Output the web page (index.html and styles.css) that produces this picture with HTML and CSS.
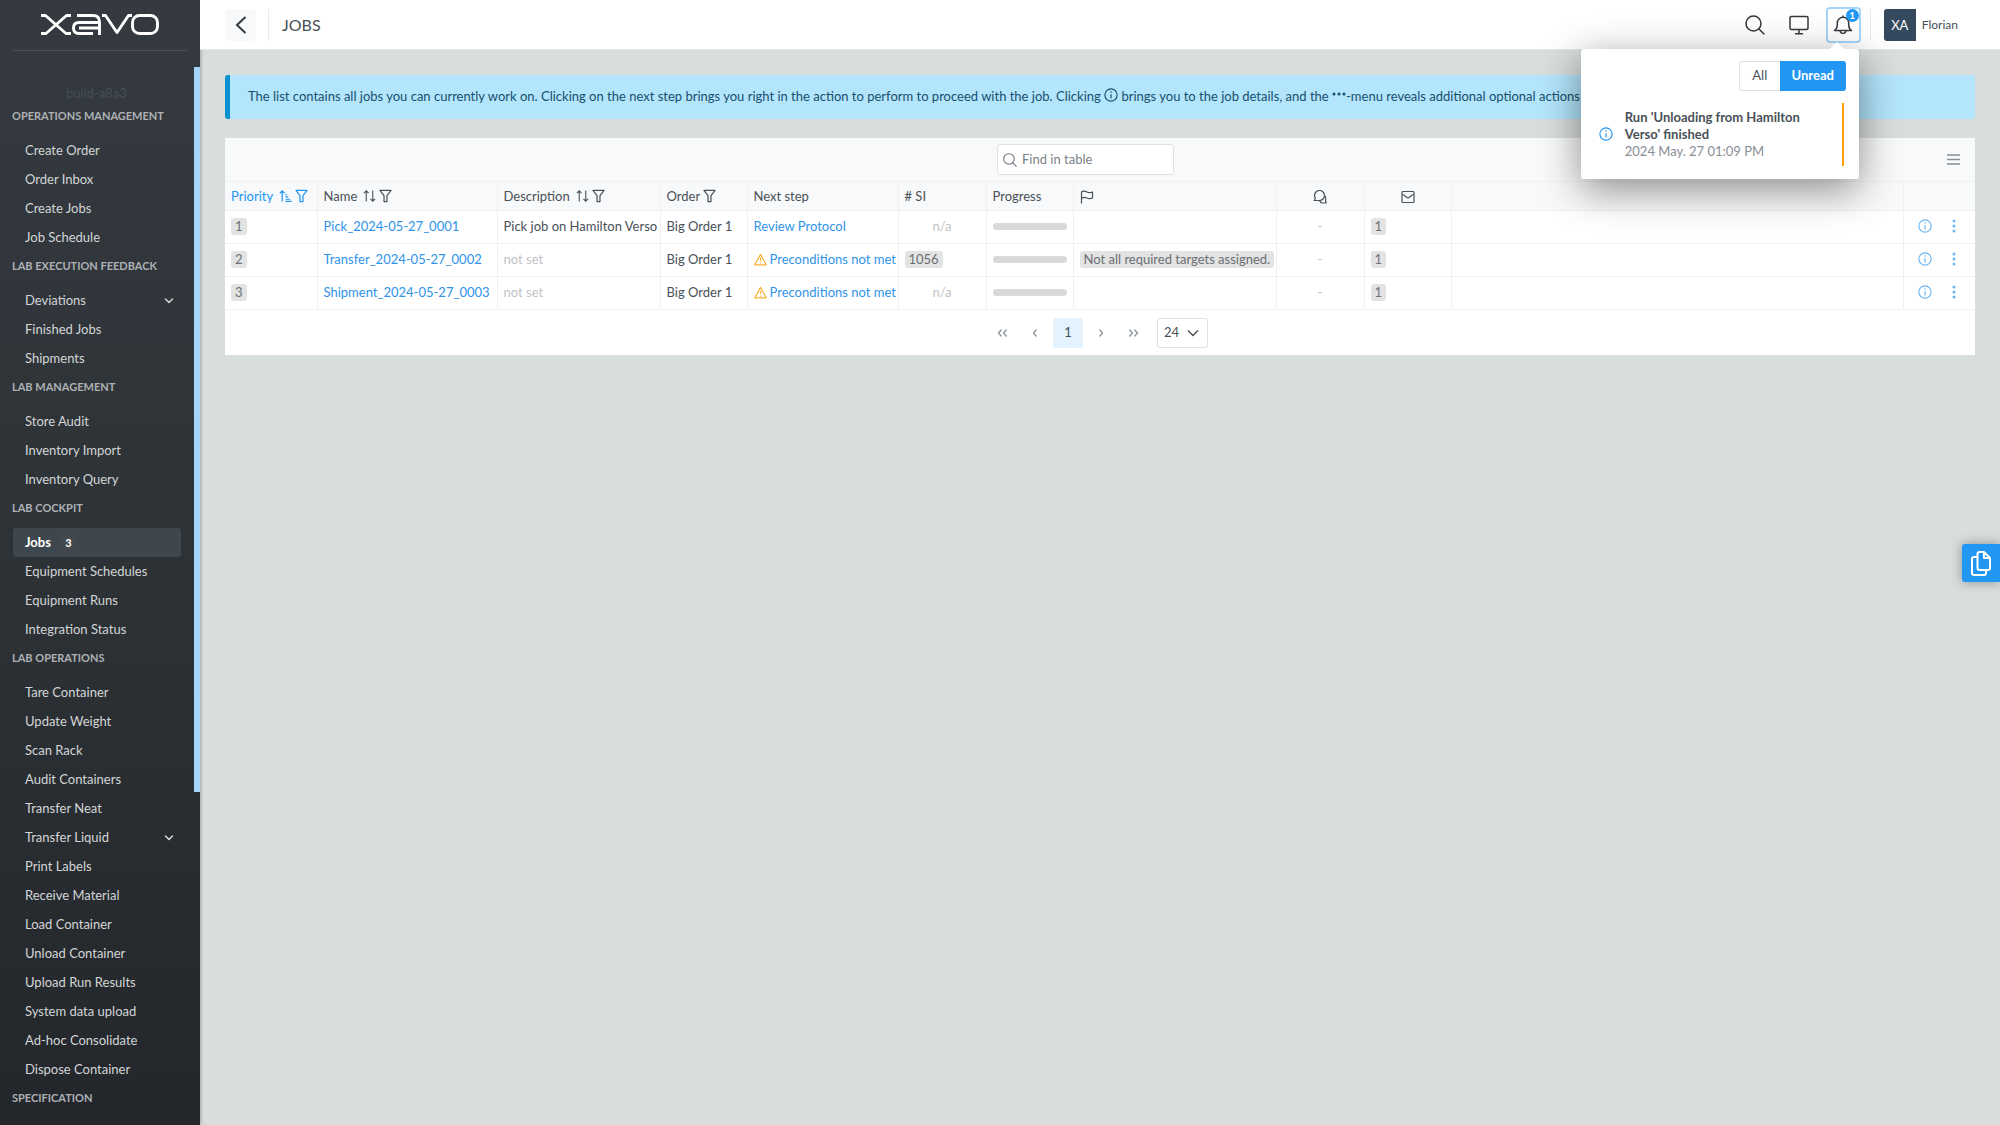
FILE: index.html
```html
<!DOCTYPE html>
<html lang="en">
<head>
<meta charset="utf-8">
<title>Jobs</title>
<link rel="stylesheet" href="styles.css">
</head>
<body>
<svg class="defs" aria-hidden="true">
  <symbol id="i-info" viewBox="0 0 16 16"><circle cx="8" cy="8" r="7" fill="none" stroke="currentColor" stroke-width="1.3"/><path d="M8 7v5" stroke="currentColor" stroke-width="1.4"/><circle cx="8" cy="4.6" r=".9" fill="currentColor"/></symbol>
  <symbol id="i-filter" viewBox="0 0 14 14"><path d="M1 1h12L8.6 6.6V13H5.4V6.6z" fill="none" stroke="currentColor" stroke-width="1.3" stroke-linejoin="round"/></symbol>
  <symbol id="i-sort" viewBox="0 0 14 14"><path d="M3.5 13V1.5M1 4l2.500-2.600L6 4M10.500 1v11.500M8 10l2.500 2.600L13 10" fill="none" stroke="currentColor" stroke-width="1.2"/></symbol>
  <symbol id="i-sorted" viewBox="0 0 14 14"><path d="M3.500 13V1.500M1 4l2.500-2.600L6 4" fill="none" stroke="currentColor" stroke-width="1.300"/><path d="M7 5.500h1.500M7 8h3M7 10.500h5M7 12.700h6.500" stroke="currentColor" stroke-width="1.300"/></symbol>
  <symbol id="i-search" viewBox="0 0 20 20"><circle cx="8.500" cy="8.500" r="7.500" fill="none" stroke="currentColor" stroke-width="1.500"/><path d="M14 14l5 5" stroke="currentColor" stroke-width="1.500" stroke-linecap="round"/></symbol>
  <symbol id="i-warn" viewBox="0 0 14 14"><path d="M7 1.500L13.200 12.800H.8z" fill="none" stroke="currentColor" stroke-width="1.200" stroke-linejoin="round"/><path d="M7 5v4M7 10.200v1.300" stroke="currentColor" stroke-width="1.200"/></symbol>
  <symbol id="i-down" viewBox="0 0 10 10"><path d="M1.500 3l3.500 3.500L8.500 3" fill="none" stroke="currentColor" stroke-width="1.500" stroke-linecap="round" stroke-linejoin="round"/></symbol>
  <symbol id="i-left" viewBox="0 0 10 10"><path d="M6.500 1.500L3.500 5l3 3.500" fill="none" stroke="currentColor" stroke-width="1.200"/></symbol>
  <symbol id="i-dots" viewBox="0 0 4 14"><circle cx="2" cy="2" r="1.500"/><circle cx="2" cy="7" r="1.500"/><circle cx="2" cy="12" r="1.500"/></symbol>
</svg>
<div class="app">
  <aside class="sidebar">
    <a class="logo" href="#" aria-label="Xavo home">
      <svg width="118" height="21" viewBox="0 0 118 21" fill="none" stroke="#fff" stroke-width="2.900" stroke-linejoin="round">
        <path d="M0 1.500h4.500L25 19.500H30M30 1.500h-4.500L5 19.500H0"/>
        <path d="M36 1.500H52Q58.500 1.500 58.500 8V21M58.500 8.500H38Q32.500 8.500 32.500 14T38 19.500H52M38 14H58.500"/>
        <path d="M61 1.500h3.500L76 18.500 87.500 1.500H91"/>
        <rect x="91.500" y="1.500" width="25" height="18" rx="7"/>
      </svg>
    </a>
    <p class="build">build-a8a3</p>
    <nav class="nav">
      <h2>OPERATIONS MANAGEMENT</h2>
      <ul>
        <li><a href="#">Create Order</a></li>
        <li><a href="#">Order Inbox</a></li>
        <li><a href="#">Create Jobs</a></li>
        <li><a href="#">Job Schedule</a></li>
      </ul>
      <h2>LAB EXECUTION FEEDBACK</h2>
      <ul>
        <li><a href="#">Deviations<svg class="caret"><use href="#i-down"/></svg></a></li>
        <li><a href="#">Finished Jobs</a></li>
        <li><a href="#">Shipments</a></li>
      </ul>
      <h2>LAB MANAGEMENT</h2>
      <ul>
        <li><a href="#">Store Audit</a></li>
        <li><a href="#">Inventory Import</a></li>
        <li><a href="#">Inventory Query</a></li>
      </ul>
      <h2>LAB COCKPIT</h2>
      <ul>
        <li><a class="active" href="#">Jobs<span class="count">3</span></a></li>
        <li><a href="#">Equipment Schedules</a></li>
        <li><a href="#">Equipment Runs</a></li>
        <li><a href="#">Integration Status</a></li>
      </ul>
      <h2>LAB OPERATIONS</h2>
      <ul>
        <li><a href="#">Tare Container</a></li>
        <li><a href="#">Update Weight</a></li>
        <li><a href="#">Scan Rack</a></li>
        <li><a href="#">Audit Containers</a></li>
        <li><a href="#">Transfer Neat</a></li>
        <li><a href="#">Transfer Liquid<svg class="caret"><use href="#i-down"/></svg></a></li>
        <li><a href="#">Print Labels</a></li>
        <li><a href="#">Receive Material</a></li>
        <li><a href="#">Load Container</a></li>
        <li><a href="#">Unload Container</a></li>
        <li><a href="#">Upload Run Results</a></li>
        <li><a href="#">System data upload</a></li>
        <li><a href="#">Ad-hoc Consolidate</a></li>
        <li><a href="#">Dispose Container</a></li>
      </ul>
      <h2>SPECIFICATION</h2>
    </nav>
    <div class="scroll-thumb"></div>
  </aside>

  <div class="main">
    <header class="topbar">
      <button class="back" aria-label="Back"><svg width="12" height="18" viewBox="0 0 12 18"><path d="M10.500 1L2 9l8.500 8" fill="none" stroke="currentColor" stroke-width="2"/></svg></button>
      <h1>JOBS</h1>
      <div class="tools">
        <button class="tool" aria-label="Search"><svg width="20" height="20"><use href="#i-search"/></svg></button>
        <button class="tool" aria-label="Display"><svg width="20" height="20" viewBox="0 0 20 20" fill="none" stroke="currentColor" stroke-width="1.500"><rect x="1" y="1.500" width="18" height="13" rx="1.500"/><path d="M10 14.500v4M6 18.700h8"/></svg></button>
        <div class="notify">
          <button class="tool focused" aria-label="Notifications" aria-expanded="true"><svg width="20" height="20" viewBox="0 0 20 20" fill="none" stroke="currentColor" stroke-width="1.500" stroke-linejoin="round" stroke-linecap="round"><path d="M1.500 15.500C3.500 14 4.300 12.500 4.300 10V8a5.700 5.700 0 0 1 11.400 0v2c0 2.500.8 4 2.800 5.500zM7 16c.5 3.200 5.500 3.200 6 0M10 2.300V1"/></svg></button>
          <span class="badge">1</span>
          <section class="popover" aria-label="Notifications">
            <div class="toggle"><button>All</button><button class="on">Unread</button></div>
            <div class="note">
              <svg class="note-icon"><use href="#i-info"/></svg>
              <div class="note-text"><strong>Run 'Unloading from Hamilton Verso' finished</strong><time>2024 May. 27 01:09 PM</time></div>
            </div>
          </section>
        </div>
        <button class="user"><span class="avatar">XA</span>Florian</button>
      </div>
    </header>

    <main class="content">
      <p class="alert">The list contains all jobs you can currently work on. Clicking on the next step brings you right in the action to perform to proceed with the job. Clicking <svg class="inline-icon"><use href="#i-info"/></svg> brings you to the job details, and the <svg class="inline-icon" viewBox="0 0 14 14" fill="currentColor"><circle cx="2" cy="6" r="1.500"/><circle cx="7" cy="6" r="1.500"/><circle cx="12" cy="6" r="1.500"/></svg>-menu reveals additional optional actions that can be performed.</p>

      <section class="card">
        <div class="toolbar">
          <div class="search-slot"><label class="search"><svg width="14" height="14"><use href="#i-search"/></svg><input type="text" placeholder="Find in table" aria-label="Find in table"></label></div>
          <button class="menu" aria-label="Table menu"><svg width="13" height="11" viewBox="0 0 13 11"><path d="M0 1h13M0 5.500h13M0 10h13" stroke="currentColor" stroke-width="1.300"/></svg></button>
        </div>
        <table>
          <colgroup><col class="w92"><col class="w180"><col class="w163"><col class="w87"><col class="w151"><col class="w88"><col class="w87"><col class="w203"><col class="w88"><col class="w87"><col><col class="w72"></colgroup>
          <thead>
            <tr>
              <th class="sorted"><span class="head">Priority<svg class="gap"><use href="#i-sorted"/></svg><svg><use href="#i-filter"/></svg></span></th>
              <th><span class="head">Name<svg class="gap"><use href="#i-sort"/></svg><svg><use href="#i-filter"/></svg></span></th>
              <th><span class="head">Description<svg class="gap"><use href="#i-sort"/></svg><svg><use href="#i-filter"/></svg></span></th>
              <th><span class="head">Order<svg><use href="#i-filter"/></svg></span></th>
              <th>Next step</th>
              <th># SI</th>
              <th>Progress</th>
              <th><svg class="head-icon" viewBox="0 0 14 14" fill="none" stroke="currentColor" stroke-width="1.200"><path d="M1.500 13.500V2c2-1.500 3.500-1 5.500 0s3.500 1 5.500 0v6c-2 1-3.500 1-5.500 0s-3.500-1-5.500.5" stroke-linejoin="round"/></svg></th>
              <th class="center"><svg class="head-icon" viewBox="0 0 14 14" fill="none" stroke="currentColor" stroke-width="1.200" stroke-linejoin="round"><path d="M1 10.500h5.500a5 5 0 1 0-5-5c0 1.500.7 2.500 1 3zM11.700 5.500c1.300 2 1.300 3.500.8 5l.7 2.500H9.500c-1.500 0-2.500-1-3-2.500"/></svg></th>
              <th class="center"><svg class="head-icon" viewBox="0 0 14 14" fill="none" stroke="currentColor" stroke-width="1.200" stroke-linejoin="round"><rect x="1" y="1.500" width="12" height="11" rx="1"/><path d="M1.500 4.500C4 5.500 6 8 7 8s3-2.500 5.500-3.500"/></svg></th>
              <th></th>
              <th></th>
            </tr>
          </thead>
          <tbody>
            <tr>
              <td><span class="tag">1</span></td>
              <td><a href="#">Pick_2024-05-27_0001</a></td>
              <td>Pick job on Hamilton Verso</td>
              <td>Big Order 1</td>
              <td><a href="#">Review Protocol</a></td>
              <td class="center muted">n/a</td>
              <td><div class="bar"></div></td>
              <td></td>
              <td class="center muted">-</td>
              <td><span class="tag">1</span></td>
              <td></td>
              <td><span class="actions"><button aria-label="Details"><svg width="14" height="14"><use href="#i-info"/></svg></button><button aria-label="More"><svg width="4" height="14"><use href="#i-dots"/></svg></button></span></td>
            </tr>
            <tr>
              <td><span class="tag">2</span></td>
              <td><a href="#">Transfer_2024-05-27_0002</a></td>
              <td class="muted">not set</td>
              <td>Big Order 1</td>
              <td><a class="warned" href="#"><svg class="warn"><use href="#i-warn"/></svg>Preconditions not met</a></td>
              <td><span class="tag">1056</span></td>
              <td><div class="bar"></div></td>
              <td><span class="tag">Not all required targets assigned.</span></td>
              <td class="center muted">-</td>
              <td><span class="tag">1</span></td>
              <td></td>
              <td><span class="actions"><button aria-label="Details"><svg width="14" height="14"><use href="#i-info"/></svg></button><button aria-label="More"><svg width="4" height="14"><use href="#i-dots"/></svg></button></span></td>
            </tr>
            <tr>
              <td><span class="tag">3</span></td>
              <td><a href="#">Shipment_2024-05-27_0003</a></td>
              <td class="muted">not set</td>
              <td>Big Order 1</td>
              <td><a class="warned" href="#"><svg class="warn"><use href="#i-warn"/></svg>Preconditions not met</a></td>
              <td class="center muted">n/a</td>
              <td><div class="bar"></div></td>
              <td></td>
              <td class="center muted">-</td>
              <td><span class="tag">1</span></td>
              <td></td>
              <td><span class="actions"><button aria-label="Details"><svg width="14" height="14"><use href="#i-info"/></svg></button><button aria-label="More"><svg width="4" height="14"><use href="#i-dots"/></svg></button></span></td>
            </tr>
          </tbody>
        </table>
        <div class="pager">
          <button aria-label="First page"><svg class="arrow"><use href="#i-left"/></svg><svg class="arrow"><use href="#i-left"/></svg></button>
          <button aria-label="Previous page"><svg class="arrow"><use href="#i-left"/></svg></button>
          <button class="current">1</button>
          <button class="next" aria-label="Next page"><svg class="arrow"><use href="#i-left"/></svg></button>
          <button class="next" aria-label="Last page"><svg class="arrow"><use href="#i-left"/></svg><svg class="arrow"><use href="#i-left"/></svg></button>
          <div class="page-size"><select aria-label="Rows per page"><option>24</option></select><svg width="12" height="8" viewBox="0 0 12 8"><path d="M1 1.500l5 5 5-5" fill="none" stroke="currentColor" stroke-width="1.400"/></svg></div>
        </div>
      </section>
    </main>
  </div>
</div>
<button class="copy" aria-label="Copy"><svg width="20" height="25" viewBox="0 0 20 25" fill="none" stroke="#fff" stroke-width="2" stroke-linejoin="round"><path d="M8.500 1H13l6 6v10a2 2 0 0 1-2 2H8.500a2 2 0 0 1-2-2V3a2 2 0 0 1 2-2zM13 1v6h6M6.500 6H3a2 2 0 0 0-2 2v14a2 2 0 0 0 2 2h10a2 2 0 0 0 2-2v-3"/></svg></button>
</body>
</html>
```
FILE: styles.css
```css
* { box-sizing: border-box; }
body {
  margin: 0;
  background: #d8dddd;
  color: #495057;
  font: 13px/17px Lato, "Noto Sans", sans-serif;
}
button, input, select { font: inherit; color: inherit; }
button { border: 0; padding: 0; background: none; cursor: pointer; }
a { color: #2f93ea; text-decoration: none; }
svg { flex: none; }
.defs { position: absolute; width: 0; height: 0; }
.app { display: flex; height: 100vh; overflow: hidden; }

.sidebar {
  position: relative;
  flex: none;
  width: 200px;
  overflow: hidden;
  background: linear-gradient(#343a40, #2d3236 50%, #23272b);
  box-shadow: 0 0 4px rgba(0, 0, 0, .4);
  z-index: 1;
}
.logo { display: block; height: 51px; margin: 0 13px; padding: 14px 0 0 28px; border-bottom: 1px solid #4a5056; }
.logo svg { display: block; }
.build { margin: 34px 0 0; text-align: center; line-height: 17px; color: #484f56; padding-right: 7px; }
.nav h2 { margin: 0 0 7px; padding-left: 12px; font-size: 11px; line-height: 27px; color: #aeb1b4; white-space: nowrap; }
.nav ul { margin: 0; padding: 0; list-style: none; }
.nav a {
  display: flex;
  align-items: center;
  height: 29px;
  margin: 0 19px 0 13px;
  padding: 0 7px 0 12px;
  border-radius: 3px;
  color: #d3d5d7;
}
.nav a.active { background: #3f474e; color: #fff; font-weight: bold; }
.caret { width: 10px; height: 10px; margin-left: auto; }
.count { margin-left: 10px; width: 15px; text-align: center; border-radius: 3px; background: #43484c; font-size: 11px; line-height: 15px; }
.scroll-thumb { position: absolute; right: 0; top: 67px; width: 6px; height: 725px; background: #a6d5fa; }

.main { flex: 1; min-width: 0; }
.topbar { position: relative; display: flex; align-items: center; height: 50px; padding: 0 42px 0 25px; background: #fff; border-bottom: 1px solid #e3e6e8; z-index: 2; }
.back { width: 31px; height: 32px; display: grid; place-items: center; border-radius: 3px; background: #f8f9fa; color: #343a40; }
h1 { margin: 0 0 0 12px; padding-left: 13px; border-left: 1px solid #e9ecef; font-size: 16px; line-height: 32px; font-weight: normal; color: #495057; }
.tools { display: flex; align-items: center; margin-left: auto; gap: 9px; }
.tool { display: grid; place-items: center; width: 35px; height: 36px; border-radius: 4px; color: #343a40; }
.focused { border: 2px solid #a6d5fa; }
.notify { position: relative; }
.badge { position: absolute; top: 2px; right: 2px; width: 13px; height: 13px; border-radius: 50%; background: #2196f3; color: #fff; font-size: 10px; line-height: 13px; text-align: center; font-weight: bold; }
.user { display: flex; align-items: center; gap: 6px; padding-left: 13px; border-left: 1px solid #e9ecef; font-size: 12px; color: #495057; }
.avatar { width: 32px; line-height: 32px; border-radius: 3px 0 0 3px; background: #34495e; color: #fff; font-size: 13px; }

.popover {
  position: absolute;
  top: 42px;
  right: 2px;
  width: 278px;
  padding: 12px 13px 13px;
  border-radius: 3px;
  background: #fff;
  box-shadow: 0 10px 40px rgba(0, 0, 0, .45);
}
.popover::before { content: ""; position: absolute; top: -7px; right: 15px; border: 7px solid transparent; border-top: 0; border-bottom-color: #fff; }
.toggle { display: flex; justify-content: flex-end; margin-bottom: 12px; }
.toggle button { width: 41px; height: 30px; border: 1px solid #dee2e6; border-right: 0; border-radius: 3px 0 0 3px; }
.toggle .on { width: 66px; border: 0; border-radius: 0 3px 3px 0; background: #2196f3; color: #fff; font-weight: bold; }
.note { display: flex; align-items: center; gap: 12px; height: 63px; margin-right: 2px; padding-left: 5px; border-right: 2px solid #ffa000; }
.note-icon { width: 14px; height: 14px; color: #2196f3; }
.note-text { width: 190px; }
.note-text strong, .note-text time { display: block; }
.note-text time { color: #868e96; }

.content { padding: 25px; }
.alert { margin: 0 0 19px; padding: 13px 18px 14px; border-left: 5px solid #0891cf; border-radius: 3px; background: #b3e5fc; color: #17506e; white-space: nowrap; }
.inline-icon { width: 14px; height: 14px; vertical-align: -1px; }
.card { background: #fff; }
.toolbar { display: flex; align-items: center; height: 43px; padding: 0 6px 0 8px; background: #f8f9fa; }
.search-slot { flex: 1; display: flex; justify-content: center; }
.search { display: flex; align-items: center; gap: 5px; width: 177px; height: 31px; padding: 0 5px; border: 1px solid #dee2e6; border-radius: 3px; background: #fff; color: #6c757d; }
.search input { flex: 1; min-width: 0; border: 0; padding: 0; outline: 0; background: none; }
.search input::placeholder { color: #7b838a; opacity: 1; }
.menu { width: 31px; height: 31px; display: grid; place-items: center; color: #868e96; }

table { width: 100%; table-layout: fixed; border-collapse: collapse; }
th, td { padding: 0 6px; border: 1px solid #eff1f3; text-align: left; white-space: nowrap; }
th:first-child, td:first-child { border-left: 0; }
th:last-child, td:last-child { border-right: 0; }
th { height: 29px; background: #f8f9fa; font-weight: normal; color: #495057; }
td { height: 33px; padding-bottom: 2px; }
.w72 { width: 72px; } .w87 { width: 87px; } .w88 { width: 88px; } .w92 { width: 92px; }
.w151 { width: 151px; } .w163 { width: 163px; } .w180 { width: 180px; } .w203 { width: 203px; }
.head { display: flex; align-items: center; gap: 3px; }
.head svg { width: 13px; height: 14px; }
.head .gap { margin-left: 3px; }
.sorted { color: #2196f3; }
.head-icon { width: 14px; height: 14px; vertical-align: middle; }
.center { text-align: center; }
.muted { color: #bfc3c6; }
.tag { display: inline-block; padding: 0 4px; border-radius: 3px; background: #e3e3e3; color: #6b6f73; }
.warned { display: flex; align-items: center; gap: 3px; }
.warn { width: 13px; height: 13px; color: #fbb034; }
.bar { height: 7px; border-radius: 4px; background: #d8d9db; }
.actions { display: flex; align-items: center; gap: 20px; padding-left: 8px; color: #6bb6f5; fill: #6bb6f5; }
.actions button { display: flex; color: inherit; }

.pager { display: flex; justify-content: center; align-items: center; gap: 3px; height: 45px; padding-right: 5px; }
.pager button { display: flex; justify-content: center; align-items: center; width: 30px; height: 30px; border-radius: 3px; color: #868e96; }
.arrow { width: 10px; height: 10px; }
.arrow + .arrow { margin-left: -5px; }
.next { transform: scaleX(-1); }
.pager .current { background: #e3f2fd; color: #495057; }
.page-size { display: flex; align-items: center; justify-content: space-between; width: 51px; height: 30px; margin-left: 5px; padding: 0 8px 0 6px; border: 1px solid #dee2e6; border-radius: 3px; }
.page-size select { appearance: none; border: 0; padding: 0; background: none; outline: 0; }

.copy { position: fixed; right: 0; top: 544px; display: grid; place-items: center; width: 38px; height: 38px; border-radius: 3px 0 0 3px; background: #2196f3; box-shadow: 0 0 12px rgba(0, 0, 0, .35); }
```
